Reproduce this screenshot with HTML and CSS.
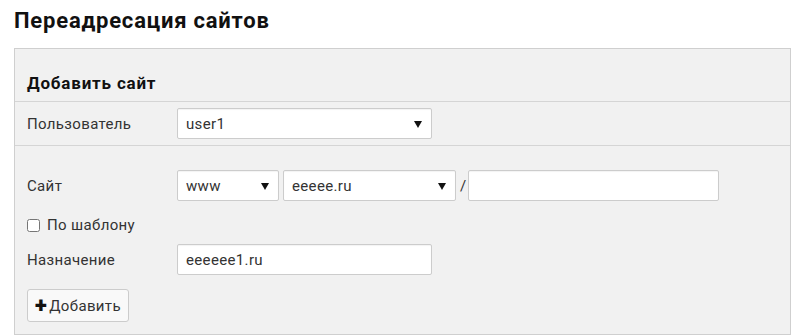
FILE: index.html
```html
<!DOCTYPE html>
<html lang="ru">
<head>
    <meta charset="UTF-8">
    <title>Переадресация сайтов</title>
    <link rel="stylesheet" href="styles.css">
</head>
<body>
    <h1>Переадресация сайтов</h1>
    <div class="panel">
        <div class="panel-head">
            <h2>Добавить сайт</h2>
        </div>
        <div class="panel-row">
            <label class="label">Пользователь</label>
            <div class="select-wrap w-user">
                <select class="field"><option>user1</option></select>
                <span class="caret"></span>
            </div>
        </div>
        <div class="panel-body">
            <div class="form-row">
                <label class="label">Сайт</label>
                <div class="select-wrap w-www">
                    <select class="field"><option>www</option></select>
                    <span class="caret"></span>
                </div>
                <div class="select-wrap w-domain">
                    <select class="field"><option>eeeee.ru</option></select>
                    <span class="caret"></span>
                </div>
                <span class="slash">/</span>
                <input type="text" class="field w-path">
            </div>
            <div class="check-row">
                <label><input type="checkbox" class="check"> По шаблону</label>
            </div>
            <div class="form-row">
                <label class="label">Назначение</label>
                <input type="text" class="field w-user" value="eeeeee1.ru">
            </div>
            <button class="btn"><span class="plus">+</span>Добавить</button>
        </div>
    </div>
</body>
</html>
```

FILE: styles.css
```css
body {
    font-family: Roboto, "Liberation Sans", sans-serif;
    font-size: 15px;
    letter-spacing: 0.35px;
    color: #333;
    margin: 0;
    padding: 0 10px 0 14px;
    background: #fff;
}
h1 {
    font-size: 22px;
    font-weight: bold;
    letter-spacing: 0.8px;
    color: #111;
    margin: 0;
    padding-top: 8px;
    height: 40px;
    line-height: 26px;
}
.panel {
    background-color: #f1f1f1;
    border: 1px solid #cfcfcf;
    width: 777px;
    box-sizing: border-box;
}
.panel-head {
    padding: 24px 12px 0;
    height: 28px;
    border-bottom: 1px solid #d5d5d5;
}
h2 {
    font-size: 17px;
    font-weight: bold;
    letter-spacing: 0.8px;
    color: #111;
    margin: 0;
    line-height: 20px;
}
.panel-row {
    display: flex;
    align-items: center;
    padding: 6px 12px 6px;
    border-bottom: 1px solid #d5d5d5;
}
.panel-body {
    padding: 24px 12px 12px;
}
.form-row {
    display: flex;
    align-items: center;
}
.label {
    width: 150px;
    flex-shrink: 0;
}
.field {
    font-family: inherit;
    font-size: 15px;
    letter-spacing: 0.35px;
    color: #333;
    height: 31px;
    box-sizing: border-box;
    border: 1px solid #ccc;
    border-radius: 2px;
    background: #fff;
    padding: 0 8px;
    box-shadow: inset 0 1px 1px rgba(0, 0, 0, 0.05);
    margin: 0;
}
select.field {
    appearance: none;
    -webkit-appearance: none;
    width: 100%;
}
.select-wrap {
    position: relative;
}
.caret {
    position: absolute;
    right: 10px;
    top: 13px;
    width: 0;
    height: 0;
    border-left: 4px solid transparent;
    border-right: 4px solid transparent;
    border-top: 7px solid #111;
}
.w-user {
    width: 255px;
}
.w-www {
    width: 102px;
    margin-right: 4px;
}
.w-domain {
    width: 173px;
}
.slash {
    margin: 0 1px 0 4px;
}
.w-path {
    width: 251px;
}
.check-row {
    margin: 16px 0 11px;
    line-height: 16px;
}
.check-row label {
    display: flex;
    align-items: center;
}
.check {
    width: 13px;
    height: 13px;
    margin: 0 7px 0 0;
}
.btn {
    margin-top: 14px;
    font-family: inherit;
    font-size: 15px;
    letter-spacing: 0.35px;
    color: #333;
    width: 102px;
    height: 33px;
    border: 1px solid #ccc;
    border-radius: 3px;
    background: #f9f9f9;
    padding: 0;
    display: flex;
    align-items: center;
    justify-content: center;
}
.plus {
    font-size: 22px;
    font-weight: 900;
    color: #111;
    margin-right: 2px;
    line-height: 1;
}
```
